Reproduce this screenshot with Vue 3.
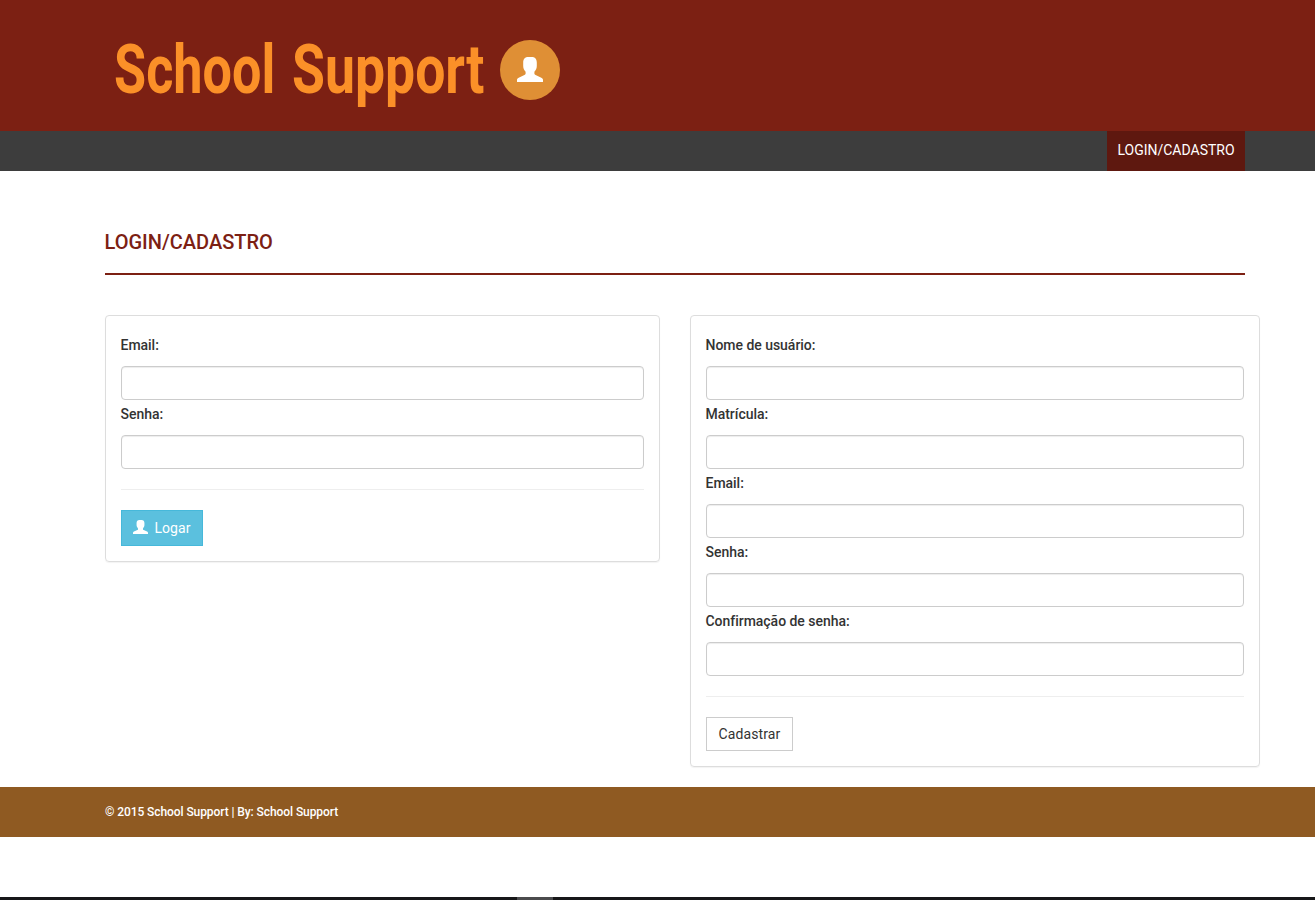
<script setup>
const loginFields = ['Email:', 'Senha:']
const signupFields = ['Nome de usuário:', 'Matrícula:', 'Email:', 'Senha:', 'Confirmação de senha:']
const userPath = 'M11 0H15C18 0 19.800 2.200 19.800 5.500V9C19.800 11.500 18.800 13.300 17.400 14.800V16.800C17.500 17.400 18 17.700 18.600 18L24.300 20.700C25.500 21.300 26 22 26 23V25H0V23C0 22 .5 21.300 1.700 20.700L7.400 18C8 17.700 8.500 17.400 8.600 16.800V14.800C7.200 13.300 6.200 11.500 6.200 9V5.500C6.200 2.200 8 0 11 0Z'
</script>

<template>
  <div class="page">
    <header class="banner">
      <svg class="brand" width="395" height="131" role="img" aria-label="School Support">
        <text transform="translate(9 93) scale(.75 1)" textLength="215" lengthAdjust="spacingAndGlyphs">School</text>
        <text transform="translate(187 93) scale(.75 1)" textLength="256.500" lengthAdjust="spacingAndGlyphs">Support</text>
      </svg>
      <div class="avatar">
        <svg width="26" height="25" viewBox="0 0 26 25"><path :d="userPath" /></svg>
      </div>
    </header>
    <nav class="menu"><a class="tab">LOGIN/CADASTRO</a></nav>
    <main>
      <h1>LOGIN/CADASTRO</h1>
      <div class="forms">
        <form class="card">
          <template v-for="(f, i) in loginFields" :key="i">
            <label :for="'login' + i">{{ f }}</label>
            <input :id="'login' + i" />
          </template>
          <hr />
          <button type="button" class="btn info">
            <svg width="15" height="14" viewBox="0 0 26 25" preserveAspectRatio="none"><path :d="userPath" /></svg>
            <span>Logar</span>
          </button>
        </form>
        <form class="card">
          <template v-for="(f, i) in signupFields" :key="i">
            <label :for="'signup' + i">{{ f }}</label>
            <input :id="'signup' + i" />
          </template>
          <hr />
          <button type="button" class="btn plain">Cadastrar</button>
        </form>
      </div>
    </main>
    <footer>© 2015 School Support | By: School Support</footer>
    <div class="taskbar"><i></i></div>
  </div>
</template>

<style>
body { margin: 0; background: #fff; }
</style>

<style scoped>
.page, .page * { box-sizing: border-box; }
.page {
  height: 900px;
  display: flex;
  flex-direction: column;
  overflow: hidden;
  font: 14px/20px Roboto, sans-serif;
  color: #333;
}
.banner {
  height: 131px;
  padding-left: 105px;
  display: flex;
  background: #7c2013;
}
.brand { display: block; }
.brand text {
  font: 700 69px Roboto, sans-serif;
  fill: #fb9028;
}
.avatar {
  width: 60px;
  height: 60px;
  margin-top: 40px;
  padding-bottom: 1px;
  border-radius: 50%;
  background: #df8f35;
  display: flex;
  align-items: center;
  justify-content: center;
}
.avatar svg { margin-bottom: 1px; }
svg path { fill: #fff; }
.menu {
  height: 40px;
  padding-right: 70px;
  display: flex;
  justify-content: flex-end;
  background: #3d3d3d;
}
.tab {
  width: 138px;
  line-height: 38px;
  text-align: center;
  white-space: nowrap;
  color: #fff;
  background: #5e180f;
}
main { padding: 60px 55px 0 105px; }
h1 {
  width: 1140px;
  height: 44px;
  margin: 0 0 40px;
  border-bottom: 2px solid #7c2013;
  font-size: 20px;
  line-height: 22px;
  font-weight: 500;
  text-indent: -.5px;
  color: #7c2013;
}
.forms {
  display: grid;
  grid-template-columns: 555px 570px;
  gap: 30px;
  align-items: start;
}
.card {
  padding: 19px 15px 15px;
  border: 1px solid #ddd;
  border-radius: 4px;
  box-shadow: 0 1px 1px rgba(0, 0, 0, .05);
}
label {
  display: block;
  height: 20px;
  margin-bottom: 11px;
  font-weight: 500;
  letter-spacing: -.03px;
  text-indent: -.5px;
}
input {
  display: block;
  width: 100%;
  height: 34px;
  margin-bottom: 4px;
  border: 1px solid #ccc;
  border-radius: 4px;
  box-shadow: inset 0 1px 1px rgba(0, 0, 0, .075);
  background: #fff;
}
hr {
  margin: 20px 0;
  border: 0;
  border-top: 1px solid #eee;
}
input:has(+ hr) { margin-bottom: 0; }
.btn {
  display: flex;
  align-items: center;
  justify-content: center;
  padding: 0;
  font: 14px/20px Roboto, sans-serif;
  letter-spacing: .1px;
}
.info {
  width: 82px;
  height: 36px;
  gap: 6px;
  border: 1px solid #46b8da;
  background: #5bc0de;
  color: #fff;
}
.info svg { margin-bottom: 2px; }
.plain {
  width: 87px;
  height: 34px;
  padding-bottom: 1px;
  border: 1px solid #ccc;
  background: #fff;
  color: #333;
}
footer {
  height: 50px;
  margin-top: 20px;
  padding-left: 105px;
  background: #8f5a22;
  color: #fff;
  font-size: 12px;
  line-height: 50px;
  font-weight: 500;
  letter-spacing: -.08px;
}
.taskbar {
  height: 3px;
  margin-top: auto;
  background: #171719;
}
.taskbar i {
  display: block;
  width: 36px;
  height: 3px;
  margin-left: 517px;
  background: #4b4b4d;
}
</style>
